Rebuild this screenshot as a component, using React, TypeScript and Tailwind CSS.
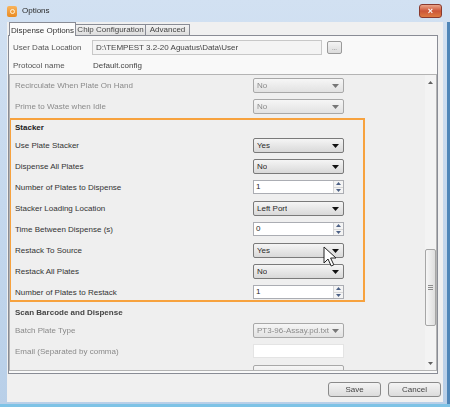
import React from 'react';

const Combo: React.FC<{ value: string; faded?: boolean }> = ({ value, faded }) => (
  <div
    className={`flex h-[15px] w-[91px] items-center justify-between rounded-[2px] border bg-linear-to-b pl-[3px] pr-[4px] ${
      faded ? 'border-[#a8a8a8] from-[#f6f6f6] to-[#e2e2e2] text-[#8a8a8a]' : 'border-[#7a7a7a] from-[#f5f5f5] to-[#d9d9d9] text-[#2a2a2a]'
    }`}
  >
    <span className="truncate">{value}</span>
    <svg width="7" height="4" viewBox="0 0 7 4" className="shrink-0">
      <path d="M0 0h7L3.5 4z" fill={faded ? '#777' : '#111'} />
    </svg>
  </div>
);

const Numeric: React.FC<{ value: string }> = ({ value }) => (
  <div className="flex h-[14px] w-[91px] border border-[#abadb3] bg-white text-[#2a2a2a]">
    <span className="flex-1 pl-[2px] leading-[12px]">{value}</span>
    <div className="flex w-[10px] flex-col border-l border-[#d6d6d6] bg-[#f4f4f4]">
      <div className="flex flex-1 items-center justify-center border-b border-[#d6d6d6]">
        <svg width="5" height="3" viewBox="0 0 5 3"><path d="M0 3h5L2.5 0z" fill="#4d6185" /></svg>
      </div>
      <div className="flex flex-1 items-center justify-center">
        <svg width="5" height="3" viewBox="0 0 5 3"><path d="M0 0h5L2.5 3z" fill="#4d6185" /></svg>
      </div>
    </div>
  </div>
);

const Row: React.FC<{ label: string; faded?: boolean; h?: string; children: React.ReactNode }> = ({ label, faded, h = 'h-[21px]', children }) => (
  <div className={`flex ${h} shrink-0 items-start pt-[3px]`}>
    <span className={`w-[238px] leading-[15px] ${faded ? 'text-[#8a8a8a]' : 'text-[#333]'}`}>{label}</span>
    {children}
  </div>
);

const App: React.FC = () => {
  return (
    <div
      className="relative flex h-[407px] w-[450px] flex-col overflow-hidden bg-linear-to-b from-[#d2e1f2] to-[#b8cfe8] text-[8px] text-[#333]"
      style={{ fontFamily: '"Liberation Sans", Arial, sans-serif' }}
    >
      {/* title bar */}
      <div className="flex h-[22px] shrink-0 items-center pl-[7px] pr-[8px] blur-[0.4px]">
        <div className="flex h-[11px] w-[10px] items-center justify-center rounded-[2px] bg-linear-to-b from-[#f9b45c] to-[#e88a1e]">
          <div className="h-[5px] w-[5px] rounded-full border border-[#fff3d8]" />
        </div>
        <span className="ml-[5px] text-[8px] text-[#2a2a2a]">Options</span>
        <div className="ml-auto flex h-[14px] w-[23px] items-center justify-center rounded-[3px] border border-[#8a3a2e] bg-linear-to-b from-[#eaa58a] via-[#cc5538] to-[#de7a40]">
          <span className="text-[9px] font-bold leading-none text-white">×</span>
        </div>
      </div>

      <div className="ml-[7px] mr-[7px] mb-[5px] flex min-h-0 flex-1 flex-col bg-[#f0f0f0]">
        {/* tabs */}
        <div className="flex h-[13px] shrink-0 items-end pl-[2px] blur-[0.4px]">
          <div className="relative z-10 -mb-px flex h-[14px] w-[67px] items-start justify-center border border-b-0 border-[#898c95] bg-[#fbfbfb] pt-[2px] text-[#333]">
            Dispense Options
          </div>
          <div className="flex h-[11px] w-[70px] items-center justify-center border border-b-0 border-l-0 border-[#898c95] bg-linear-to-b from-[#f2f2f2] to-[#dedede] text-[#444]">
            Chip Configuration
          </div>
          <div className="flex h-[11px] w-[44px] items-center justify-center border border-b-0 border-l-0 border-[#898c95] bg-linear-to-b from-[#f2f2f2] to-[#dedede] text-[#444]">
            Advanced
          </div>
        </div>

        {/* tab panel */}
        <div className="ml-px mr-[5px] flex h-[339px] shrink-0 flex-col overflow-hidden border border-[#898c95] bg-[#f9f9f9]">
          <div className="shrink-0 blur-[0.4px] text-[#555]">
            <div className="mt-[4px] flex h-[15px] items-center pl-[4px]">
              <span className="w-[79px]">User Data Location</span>
              <div className="flex h-[15px] w-[230px] items-center border border-[#c8c8c8] bg-[#f4f4f4] pl-[3px] text-[#444]">
                D:\TEMPEST 3.2-20 Aguatus\Data\User
              </div>
              <div className="ml-[5px] flex h-[13px] w-[15px] items-center justify-center rounded-[2px] border border-[#9a9a9a] bg-linear-to-b from-[#f4f4f4] to-[#dcdcdc] text-[6px] leading-none">
                ...
              </div>
            </div>
            <div className="mt-[4px] flex h-[14px] items-center pl-[4px]">
              <span className="w-[80px]">Protocol name</span>
              <span className="text-[#444]">Default.config</span>
            </div>
          </div>

          {/* scroll panel */}
          <div className="mt-px mb-[2px] flex min-h-0 flex-1 overflow-hidden border border-[#b4b4b4] bg-[#efefef]">
            <div className="flex min-h-0 flex-1 flex-col overflow-hidden">
              <div className="shrink-0 pl-[5px] blur-[0.4px]">
                <Row label="Recirculate When Plate On Hand" faded>
                  <Combo value="No" faded />
                </Row>
                <Row label="Prime to Waste when Idle" faded>
                  <Combo value="No" faded />
                </Row>
              </div>

              <div className="-ml-px mt-px w-[356px] shrink-0 border-2 border-[#f7a23e] pl-[4px]">
                <div className="h-[15px] pt-[3px] font-bold leading-[10px] text-[#222]">Stacker</div>
                <Row label="Use Plate Stacker"><Combo value="Yes" /></Row>
                <Row label="Dispense All Plates"><Combo value="No" /></Row>
                <Row label="Number of Plates to Dispense"><Numeric value="1" /></Row>
                <Row label="Stacker Loading Location"><Combo value="Left Port" /></Row>
                <Row label="Time Between Dispense (s)"><Numeric value="0" /></Row>
                <Row label="Restack To Source"><Combo value="Yes" /></Row>
                <Row label="Restack All Plates"><Combo value="No" /></Row>
                <Row label="Number of Plates to Restack" h="h-[18px]"><Numeric value="1" /></Row>
              </div>

              <div className="shrink-0 pl-[5px] blur-[0.4px]">
                <div className="flex h-[18px] items-end pb-[1px] font-bold text-[#444]">Scan Barcode and Dispense</div>
                <Row label="Batch Plate Type" faded>
                  <Combo value="PT3-96-Assay.pd.txt" faded />
                </Row>
                <Row label="Email (Separated by comma)" faded>
                  <div className="h-[14px] w-[91px] border border-[#e4e4e4] bg-white" />
                </Row>
                <Row label="Process Labels" faded>
                  <Combo value="No" faded />
                </Row>
              </div>
            </div>

            {/* scrollbar */}
            <div className="flex w-[11px] shrink-0 flex-col items-center bg-[#f3f3f3] blur-[0.3px]">
              <div className="flex h-[14px] shrink-0 items-center">
                <svg width="5" height="3" viewBox="0 0 5 3"><path d="M0 3h5L2.5 0z" fill="#606060" /></svg>
              </div>
              <div className="mt-[160px] flex h-[77px] w-[11px] shrink-0 items-center justify-center rounded-[2px] border border-[#a6a6a6] bg-linear-to-r from-[#f6f6f6] to-[#dedede]">
                <div className="flex flex-col gap-[1px]">
                  <div className="h-px w-[5px] bg-[#8c8c8c]" />
                  <div className="h-px w-[5px] bg-[#8c8c8c]" />
                  <div className="h-px w-[5px] bg-[#8c8c8c]" />
                </div>
              </div>
              <div className="mt-auto flex h-[14px] shrink-0 items-center">
                <svg width="5" height="3" viewBox="0 0 5 3"><path d="M0 0h5L2.5 3z" fill="#606060" /></svg>
              </div>
            </div>
          </div>
        </div>

        {/* buttons */}
        <div className="flex flex-1 items-start justify-end gap-[7px] pr-[2px] pt-[8px] blur-[0.4px]">
          <button className="h-[15px] w-[53px] rounded-[3px] border border-[#8a8a8a] bg-linear-to-b from-[#f4f4f4] to-[#dcdcdc] text-[8px] text-[#444]">
            Save
          </button>
          <button className="h-[15px] w-[53px] rounded-[3px] border border-[#8a8a8a] bg-linear-to-b from-[#f4f4f4] to-[#dcdcdc] text-[8px] text-[#444]">
            Cancel
          </button>
        </div>
      </div>

      <div className="absolute bottom-0 right-0 top-[22px] w-[3px] bg-[#4f86b8]" />
      <div className="absolute bottom-0 left-0 right-0 h-[3px] bg-[#7ec3e6]" />

      {/* mouse cursor */}
      <svg className="absolute left-[323px] top-[246px]" width="14" height="22" viewBox="0 0 14 22">
        <path d="M1 1v16l4-4 3.2 7 2.6-1.2-3.2-6.8H13z" fill="#fff" stroke="#222" strokeWidth="1" strokeLinejoin="round" />
      </svg>
    </div>
  );
};

export default App;
